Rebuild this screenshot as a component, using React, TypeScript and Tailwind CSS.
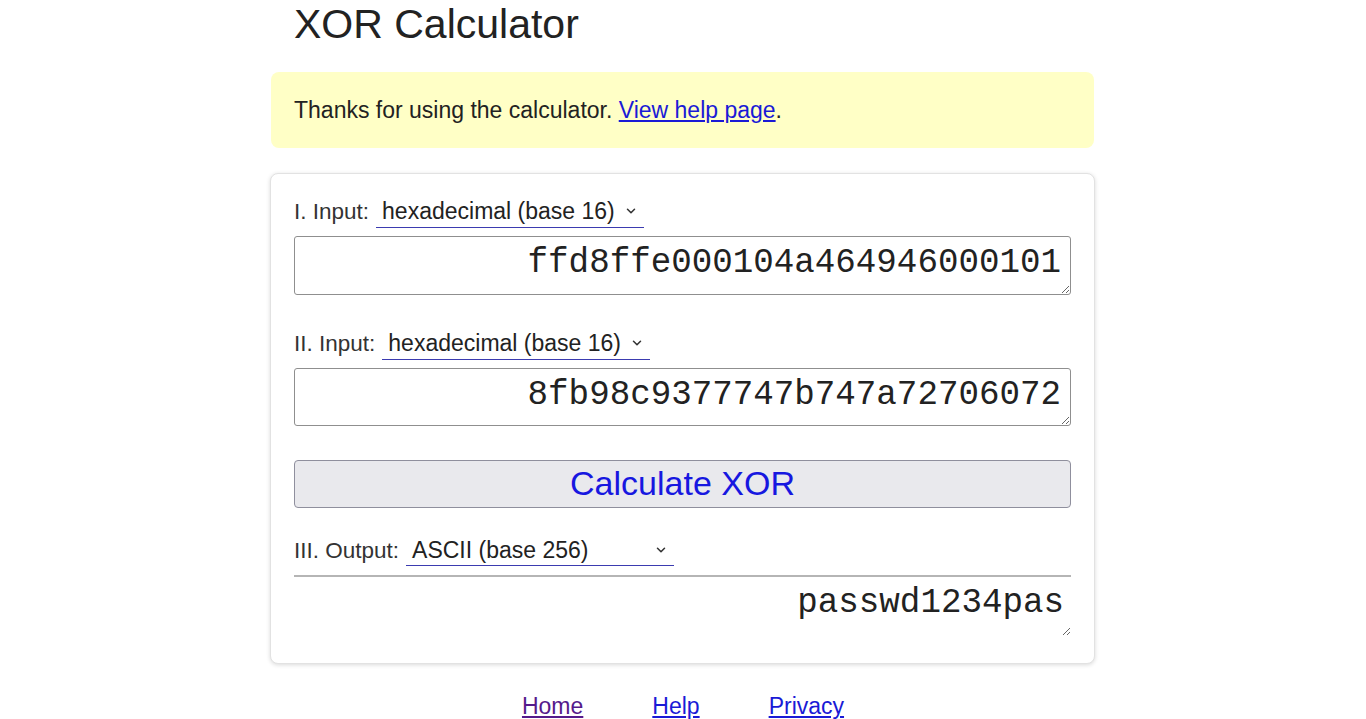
import { ChevronDown } from 'lucide-react';

const sans = "font-['Liberation_Sans',Arial,sans-serif]";
const mono = "font-['Liberation_Mono','Courier_New',monospace]";

function FakeSelect({ value }: { value: string }) {
    return (
        <div className="flex h-[32px] w-[268px] items-center justify-between border-b border-[#3b3bb0] pl-[6px] pr-[6px] text-[23px] text-[#222]">
            <span>{value}</span>
            <ChevronDown className="h-[14px] w-[14px] text-[#333]" strokeWidth={2.6} />
        </div>
    );
}

function LabelRow({ label, value, className }: { label: string; value: string; className?: string }) {
    return (
        <div className={`flex items-center gap-[7px] text-[22.5px] text-[#333] ${className ?? ''}`}>
            <span>{label}</span>
            <FakeSelect value={value} />
        </div>
    );
}

export default function App() {
    return (
        <div className={`min-h-screen bg-white ${sans}`}>
            <div className="mx-auto w-[826px]">
                <h1 className="h-[48px] pl-[24px] text-[41px] leading-[48px] text-[#222]">XOR Calculator</h1>

                <div className="ml-[1px] mt-[24px] flex h-[76px] w-[823px] items-center rounded-[8px] bg-[#ffffc6] pl-[23px] text-[23px] text-[#222]">
                    <p>
                        Thanks for using the calculator.{' '}
                        <a href="#" className="text-[#1a1ad6] underline">
                            View help page
                        </a>
                        .
                    </p>
                </div>

                <section className="mt-[25px] w-[825px] rounded-[8px] border border-[#e2e2e2] bg-white px-[23px] pb-[27px] pt-[21px] shadow-[0_1px_4px_rgba(0,0,0,0.15)]">
                    <LabelRow label="I. Input:" value="hexadecimal (base 16)" />
                    <textarea
                        readOnly
                        defaultValue="ffd8ffe000104a464946000101"
                        className={`mt-[7px] block h-[59px] w-full resize-y rounded-[3px] border border-[#8f8f8f] pr-[9px] pt-[4px] text-right text-[34.2px] leading-[44px] text-[#222] outline-none ${mono}`}
                    />

                    <LabelRow label="II. Input:" value="hexadecimal (base 16)" className="mt-[32px]" />
                    <textarea
                        readOnly
                        defaultValue="8fb98c9377747b747a72706072"
                        className={`mt-[7px] block h-[58px] w-full resize-y rounded-[3px] border border-[#8f8f8f] pr-[9px] pt-[4px] text-right text-[34.2px] leading-[44px] text-[#222] outline-none ${mono}`}
                    />

                    <button className="mt-[34px] flex h-[48px] w-full items-center justify-center rounded-[4px] border border-[#8f8f9d] bg-[#e9e9ed] text-[34px] text-[#1717e0]">
                        Calculate XOR
                    </button>

                    <LabelRow label="III. Output:" value="ASCII (base 256)" className="mt-[26px]" />
                    <textarea
                        readOnly
                        defaultValue="passwd1234pas"
                        className={`mt-[8px] block h-[61px] w-full resize-y border-t-2 border-[#b5b5b5] pr-[7px] pt-[4px] text-right text-[34.2px] leading-[44px] text-[#222] outline-none ${mono}`}
                    />
                </section>

                <nav className="mt-[29px] flex justify-center gap-[69px] text-[23px] leading-[26px]">
                    <a href="#" className="text-[#551a8b] underline">
                        Home
                    </a>
                    <a href="#" className="text-[#1a1ad6] underline">
                        Help
                    </a>
                    <a href="#" className="text-[#1a1ad6] underline">
                        Privacy
                    </a>
                </nav>
            </div>
        </div>
    );
}
